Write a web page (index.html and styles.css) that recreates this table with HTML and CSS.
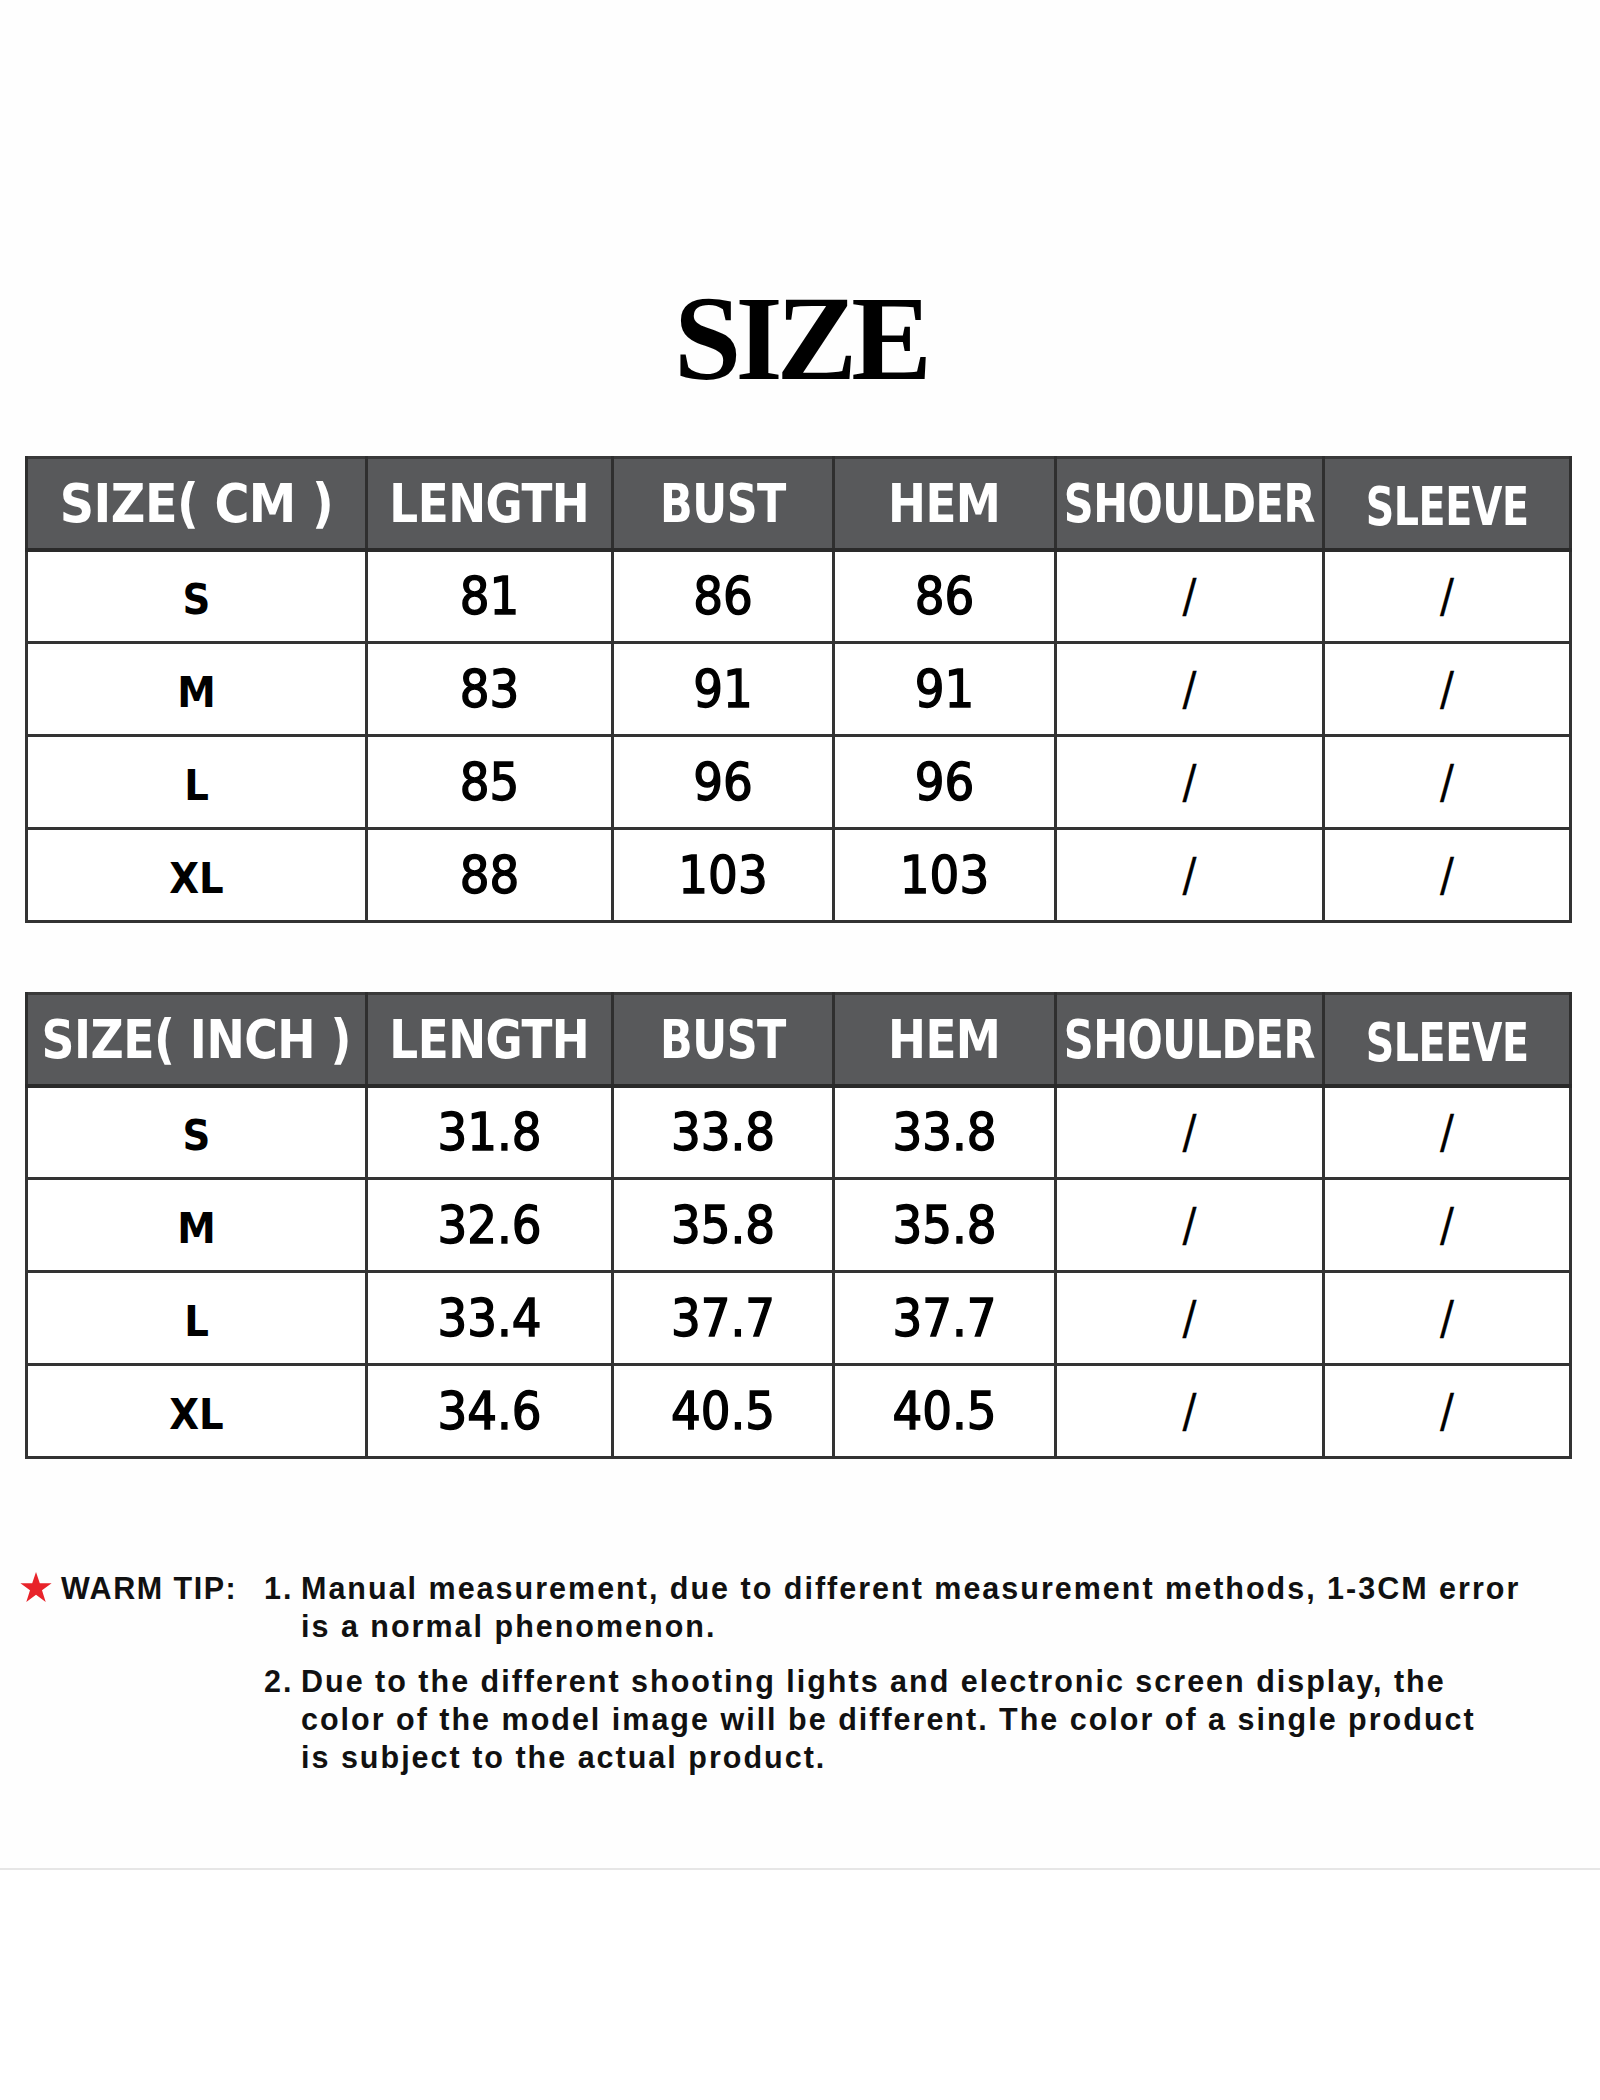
FILE: index.html
```html
<!DOCTYPE html>
<html lang="en">
<head>
<meta charset="utf-8">
<title>Size chart</title>
<link rel="stylesheet" href="styles.css">
</head>
<body>
<main class="sheet">
  <h1 class="title">SIZE</h1>

  <table class="chart chart-cm">
    <colgroup>
      <col class="c1"><col class="c2"><col class="c3"><col class="c4"><col class="c5"><col class="c6">
    </colgroup>
    <thead>
      <tr><th><span class="hd">SIZE( CM )</span></th><th><span class="hd n95">LENGTH</span></th><th><span class="hd n90">BUST</span></th><th><span class="hd n95">HEM</span></th><th><span class="hd n87">SHOULDER</span></th><th class="sleeve"><span class="hd n83">SLEEVE</span></th></tr>
    </thead>
    <tbody>
      <tr><td class="sz">S</td><td>81</td><td>86</td><td>86</td><td class="na">/</td><td class="na">/</td></tr>
      <tr><td class="sz">M</td><td>83</td><td>91</td><td>91</td><td class="na">/</td><td class="na">/</td></tr>
      <tr><td class="sz">L</td><td>85</td><td>96</td><td>96</td><td class="na">/</td><td class="na">/</td></tr>
      <tr><td class="sz">XL</td><td>88</td><td>103</td><td>103</td><td class="na">/</td><td class="na">/</td></tr>
    </tbody>
  </table>

  <table class="chart chart-inch">
    <colgroup>
      <col class="c1"><col class="c2"><col class="c3"><col class="c4"><col class="c5"><col class="c6">
    </colgroup>
    <thead>
      <tr><th><span class="hd n97">SIZE( INCH )</span></th><th><span class="hd n95">LENGTH</span></th><th><span class="hd n90">BUST</span></th><th><span class="hd n95">HEM</span></th><th><span class="hd n87">SHOULDER</span></th><th class="sleeve"><span class="hd n83">SLEEVE</span></th></tr>
    </thead>
    <tbody>
      <tr><td class="sz">S</td><td>31.8</td><td>33.8</td><td>33.8</td><td class="na">/</td><td class="na">/</td></tr>
      <tr><td class="sz">M</td><td>32.6</td><td>35.8</td><td>35.8</td><td class="na">/</td><td class="na">/</td></tr>
      <tr><td class="sz">L</td><td>33.4</td><td>37.7</td><td>37.7</td><td class="na">/</td><td class="na">/</td></tr>
      <tr><td class="sz">XL</td><td>34.6</td><td>40.5</td><td>40.5</td><td class="na">/</td><td class="na">/</td></tr>
    </tbody>
  </table>

  <section class="tip">
    <div class="tip-label">
      <svg class="star" viewBox="0 0 32 31" width="32" height="31" aria-hidden="true">
        <polygon points="16,0 19.8,11.3 31.6,11.3 22,18.3 25.7,30 16,22.8 6.3,30 10,18.3 0.4,11.3 12.2,11.3" fill="#e8232a"/>
      </svg>
      <span>WARM TIP:</span>
    </div>
    <ol class="tip-list">
      <li><span class="num">1.</span><span class="txt">Manual measurement, due to different measurement methods, 1-3CM error<br>is a normal phenomenon.</span></li>
      <li><span class="num">2.</span><span class="txt">Due to the different shooting lights and electronic screen display, the<br>color of the model image will be different. The color of a single product<br>is subject to the actual product.</span></li>
    </ol>
  </section>
</main>
</body>
</html>
```

FILE: styles.css
```css
html, body {
  margin: 0;
  padding: 0;
  background: #ffffff;
}

.sheet {
  box-sizing: border-box;
  height: 1870px;
  padding-top: 278px;
  border-bottom: 2px solid #e6e6e6;
  background: #fefefe;
}

.title {
  margin: 0;
  font-family: "Liberation Serif", "Times New Roman", serif;
  font-weight: bold;
  font-size: 121px;
  line-height: 121px;
  letter-spacing: -6px;
  text-align: center;
  color: #000;
}

.chart {
  margin: 57px 0 0 25px;
  width: 1544px;
  table-layout: fixed;
  border-collapse: collapse;
  border: 3px solid #3a3a3a;
  font-family: "DejaVu Sans Condensed", "DejaVu Sans", sans-serif;
  color: #000;
}

.chart-inch {
  margin-top: 69px;
}

.c1 { width: 340px; }
.c2 { width: 246px; }
.c3 { width: 221px; }
.c4 { width: 222px; }
.c5 { width: 268px; }
.c6 { width: 247px; }

.chart thead tr {
  height: 92px;
}

.chart tbody tr {
  height: 93px;
}

.chart th {
  padding: 0;
  background: #58595b;
  color: #ffffff;
  font-size: 53px;
  font-weight: bold;
  line-height: 1;
  text-align: center;
  vertical-align: middle;
  border-left: 3px solid #2f2f2f;
  border-right: 3px solid #2f2f2f;
  border-bottom: 4px solid #2a2a2a;
  white-space: nowrap;
  overflow: visible;
}

.hd {
  display: inline-block;
  margin: 0 -40px;
  letter-spacing: -0.5px;
  transform-origin: center;
}

.n97 { transform: scaleX(0.96); }
.n95 { transform: scaleX(0.95); }
.n90 { transform: scaleX(0.9); }
.n87 { transform: scaleX(0.87); }
.n83 { transform: scaleX(0.83); }

.chart th.sleeve {
  padding-top: 6px;
}

.chart td {
  padding: 0;
  text-align: center;
  vertical-align: middle;
  font-size: 52px;
  font-weight: normal;
  line-height: 1;
  -webkit-text-stroke: 1.4px #000;
  border: 3px solid #333333;
  background: #ffffff;
}

.chart td.sz {
  font-size: 43px;
  font-weight: bold;
  -webkit-text-stroke: 0;
  padding-top: 6px;
}

.chart td.na {
  font-size: 46px;
  -webkit-text-stroke: 0.3px #000;
}

.tip {
  display: flex;
  margin-top: 110px;
  font-family: "Liberation Sans", Arial, sans-serif;
  font-weight: bold;
  font-size: 30.5px;
  line-height: 38px;
  letter-spacing: 2px;
  color: #111;
  white-space: nowrap;
}

.tip-label {
  display: flex;
  align-items: flex-start;
  width: 264px;
  flex: none;
}

.star {
  margin: 3px 9px 0 20px;
}

.tip-label span {
  letter-spacing: 1.5px;
}

.tip-list {
  list-style: none;
  margin: 0;
  padding: 0;
}

.tip-list li {
  display: flex;
  margin-bottom: 17px;
}

.num {
  width: 37px;
  flex: none;
}
```
